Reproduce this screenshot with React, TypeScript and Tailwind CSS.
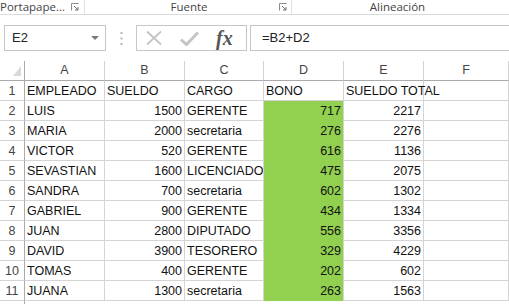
const rows: [string, number, string, number, number][] = [
  ["LUIS", 1500, "GERENTE", 717, 2217],
  ["MARIA", 2000, "secretaria", 276, 2276],
  ["VICTOR", 520, "GERENTE", 616, 1136],
  ["SEVASTIAN", 1600, "LICENCIADO", 475, 2075],
  ["SANDRA", 700, "secretaria", 602, 1302],
  ["GABRIEL", 900, "GERENTE", 434, 1334],
  ["JUAN", 2800, "DIPUTADO", 556, 3356],
  ["DAVID", 3900, "TESORERO", 329, 4229],
  ["TOMAS", 400, "GERENTE", 202, 602],
  ["JUANA", 1300, "secretaria", 263, 1563],
];

const cols = "grid grid-cols-[25px_80px_80px_79px_80px_80px_85px]";

function Launcher() {
  return (
    <svg width="8" height="8" viewBox="0 0 8 8" className="mt-[3px]">
      <path d="M0.5 7.5V0.5H7.5" fill="none" stroke="#8a8a8a" />
      <path d="M3 3L7 7M7 4V7H4" fill="none" stroke="#6a6a6a" />
    </svg>
  );
}

function Cell({
  children,
  right,
  green,
  spill,
}: {
  children?: React.ReactNode;
  right?: boolean;
  green?: boolean;
  spill?: boolean;
}) {
  return (
    <div
      className={`h-5 whitespace-nowrap px-[2px] leading-[20px] ${spill ? "overflow-visible" : "overflow-hidden"} ${
        green ? "bg-[#92d050] border-r border-r-[#d4d4d4]" : "border-r border-b border-[#d4d4d4]"
      } ${right ? "text-right" : "text-left"}`}
    >
      {children}
    </div>
  );
}

export default function App() {
  return (
    <div className="w-[509px] h-[304px] overflow-hidden bg-white font-['Liberation_Sans',sans-serif] text-[#222]">
      {/* ribbon group labels */}
      <div className="flex h-[15px] border-b border-[#dadada] font-['Open_Sans',sans-serif] text-[11.5px] leading-[14px] text-[#444]">
        <div className="flex w-[85px] items-start justify-between border-r border-[#e1e1e1] pr-[5px]">
          <span>Portapape...</span>
          <Launcher />
        </div>
        <div className="relative flex w-[207px] justify-center border-r border-[#e1e1e1]">
          <span className="pl-[2px]">Fuente</span>
          <div className="absolute right-[4px] top-0">
            <Launcher />
          </div>
        </div>
        <div className="flex flex-1 justify-center">
          <span className="-ml-[6px]">Alineación</span>
        </div>
      </div>

      {/* formula bar */}
      <div className="mt-[10px] flex h-[26px] items-stretch text-[13px]">
        <div className="ml-[4px] flex w-[102px] items-center justify-between border border-[#c6c6c6] pl-[7px] pr-[6px]">
          <span className="text-[#222]">E2</span>
          <svg width="8" height="5" viewBox="0 0 8 5">
            <path d="M0 0H8L4 4Z" fill="#7a7a7a" />
          </svg>
        </div>
        <div className="flex w-[30px] items-center justify-center">
          <svg width="3" height="13" viewBox="0 0 3 13">
            <rect x="0.5" y="0" width="2" height="2" fill="#b8b8b8" />
            <rect x="0.5" y="5.5" width="2" height="2" fill="#b8b8b8" />
            <rect x="0.5" y="11" width="2" height="2" fill="#b8b8b8" />
          </svg>
        </div>
        <div className="flex w-[111px] items-center border border-[#c6c6c6]">
          <svg width="18" height="16" viewBox="0 0 18 16" className="ml-[8px]">
            <path d="M2 1.5L16 14.5M16 1.5L2 14.5" stroke="#c4c4c4" strokeWidth="1.8" />
          </svg>
          <svg width="19" height="15" viewBox="0 0 19 15" className="ml-[17px]">
            <path d="M1 8.5L6.5 13.5L18 1.5" fill="none" stroke="#c4c4c4" strokeWidth="3" />
          </svg>
          <span className="ml-[17px] font-['Liberation_Serif',serif] text-[20px] font-bold italic leading-none text-[#555]">
            fx
          </span>
        </div>
        <div className="ml-[3px] flex flex-1 items-center border border-r-0 border-[#c6c6c6] pl-[11px] text-[#222]">
          =B2+D2
        </div>
      </div>

      {/* grid */}
      <div className="mt-[10px] text-[12.5px] text-[#111]">
        <div className={`${cols} h-5 leading-[19px] text-[#444]`}>
          <div className="relative border-r border-b border-[#ababab]">
            <svg width="8" height="10" viewBox="0 0 8 10" className="absolute bottom-[4px] right-[3px]">
              <path d="M8 0V10H0Z" fill="#dadada" />
            </svg>
          </div>
          {["A", "B", "C", "D", "E", "F"].map((l) => (
            <div key={l} className="border-r border-r-[#d4d4d4] border-b border-b-[#ababab] text-center">
              {l}
            </div>
          ))}
        </div>
        <div className={cols}>
          <div className="h-5 border-r border-r-[#ababab] border-b border-b-[#d4d4d4] text-center leading-[20px] text-[#444]">1</div>
          <Cell>EMPLEADO</Cell>
          <Cell>SUELDO</Cell>
          <Cell>CARGO</Cell>
          <Cell>BONO</Cell>
          <Cell spill>SUELDO TOTAL</Cell>
          <Cell />
        </div>
        {rows.map((r, i) => (
          <div key={i} className={cols}>
            <div className="h-5 border-r border-r-[#ababab] border-b border-b-[#d4d4d4] text-center leading-[20px] text-[#444]">
              {i + 2}
            </div>
            <Cell>{r[0]}</Cell>
            <Cell right>{r[1]}</Cell>
            <Cell>{r[2]}</Cell>
            <Cell right green>
              {r[3]}
            </Cell>
            <Cell right>{r[4]}</Cell>
            <Cell />
          </div>
        ))}
        <div className={cols}>
          <div className="h-5 border-r border-r-[#ababab]" />
        </div>
      </div>
    </div>
  );
}
